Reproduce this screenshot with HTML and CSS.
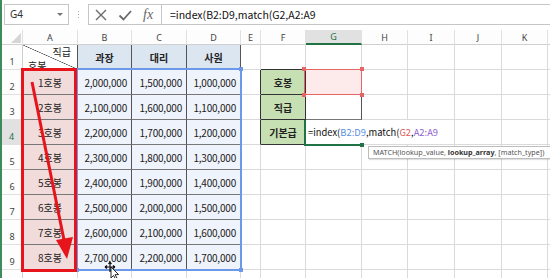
FILE: index.html
```html
<!DOCTYPE html>
<html>
<head>
    <title>호봉표 - Excel</title>
    <link rel="stylesheet" href="styles.css">
</head>
<body>
<div class="app">
    <div class="edge"></div>
    <div class="main">
        <div class="formula-bar">
            <div class="name-box">G4<span class="drop"></span></div>
            <div class="grip"><span></span><span></span><span></span></div>
            <div class="fx-box">
                <svg class="ico" width="14" height="14" viewBox="0 0 14 14"><path d="M2 2 L12 12 M12 2 L2 12" stroke="#6a6a6a" stroke-width="1.4" fill="none"/></svg>
                <svg class="ico" width="14" height="14" viewBox="0 0 14 14"><path d="M1.5 7.5 L5.5 11.5 L13 3" stroke="#6a6a6a" stroke-width="1.8" fill="none"/></svg>
                <span class="fx">fx</span>
            </div>
            <div class="formula-input">=index(B2:D9,match(G2,A2:A9</div>
        </div>

        <table class="sheet">
            <colgroup>
                <col class="w-rh"><col class="w-a"><col class="w-b"><col class="w-c"><col class="w-d"><col class="w-e">
                <col class="w-f"><col class="w-g"><col class="w-h"><col class="w-i"><col class="w-j"><col class="w-k"><col class="w-l">
            </colgroup>
            <tr class="head-row">
                <td class="corner"><span class="tri"></span></td>
                <td class="ch">A</td><td class="ch">B</td><td class="ch">C</td><td class="ch">D</td><td class="ch">E</td>
                <td class="ch">F</td><td class="ch active">G</td><td class="ch">H</td><td class="ch">I</td><td class="ch">J</td><td class="ch">K</td><td class="ch"></td>
            </tr>
            <tr>
                <td class="rh">1</td>
                <td class="tb diag"><div class="diag-text"><span class="top">직급</span><span class="bottom">호봉</span></div></td>
                <td class="tb hd">과장</td><td class="tb hd">대리</td><td class="tb hd">사원</td>
                <td></td><td class="bb"></td><td class="bb"></td><td></td><td></td><td></td><td></td><td></td>
            </tr>
            <tr>
                <td class="rh">2</td>
                <td class="tb a">1호봉</td><td class="tb num">2,000,000</td><td class="tb num">1,500,000</td><td class="tb num">1,000,000</td>
                <td class="br"></td><td class="tb lbl">호봉</td><td class="tb pink"></td><td></td><td></td><td></td><td></td><td></td>
            </tr>
            <tr>
                <td class="rh">3</td>
                <td class="tb a">2호봉</td><td class="tb num">2,100,000</td><td class="tb num">1,600,000</td><td class="tb num">1,100,000</td>
                <td class="br"></td><td class="tb lbl">직급</td><td class="tb"></td><td></td><td></td><td></td><td></td><td></td>
            </tr>
            <tr>
                <td class="rh active">4</td>
                <td class="tb a">3호봉</td><td class="tb num">2,200,000</td><td class="tb num">1,700,000</td><td class="tb num">1,200,000</td>
                <td class="br"></td><td class="tb lbl">기본급</td>
                <td class="edit" colspan="3">=index(<span class="ref-b">B2:D9</span>,match(<span class="ref-g">G2</span>,<span class="ref-a">A2:A9</span></td>
                <td></td><td></td><td></td>
            </tr>
            <tr>
                <td class="rh">5</td>
                <td class="tb a">4호봉</td><td class="tb num">2,300,000</td><td class="tb num">1,800,000</td><td class="tb num">1,300,000</td>
                <td></td><td></td><td></td><td></td><td></td><td></td><td></td><td></td>
            </tr>
            <tr>
                <td class="rh">6</td>
                <td class="tb a">5호봉</td><td class="tb num">2,400,000</td><td class="tb num">1,900,000</td><td class="tb num">1,400,000</td>
                <td></td><td></td><td></td><td></td><td></td><td></td><td></td><td></td>
            </tr>
            <tr>
                <td class="rh">7</td>
                <td class="tb a">6호봉</td><td class="tb num">2,500,000</td><td class="tb num">2,000,000</td><td class="tb num">1,500,000</td>
                <td></td><td></td><td></td><td></td><td></td><td></td><td></td><td></td>
            </tr>
            <tr>
                <td class="rh">8</td>
                <td class="tb a">7호봉</td><td class="tb num">2,600,000</td><td class="tb num">2,100,000</td><td class="tb num">1,600,000</td>
                <td></td><td></td><td></td><td></td><td></td><td></td><td></td><td></td>
            </tr>
            <tr>
                <td class="rh">9</td>
                <td class="tb a">8호봉</td><td class="tb num">2,700,000</td><td class="tb num">2,200,000</td><td class="tb num">1,700,000</td>
                <td></td><td></td><td></td><td></td><td></td><td></td><td></td><td></td>
            </tr>
            <tr>
                <td class="rh">10</td>
                <td></td><td></td><td></td><td></td><td></td><td></td><td></td><td></td><td></td><td></td><td></td><td></td>
            </tr>
        </table>
    </div>

    <!-- overlays: range highlights, annotation, tooltip -->
    <div class="sel-blue">
        <span class="hdl tr"></span><span class="hdl br"></span><span class="hdl bl"></span>
    </div>
    <div class="sel-red">
        <span class="hdl tl"></span><span class="hdl tr"></span><span class="hdl br"></span><span class="hdl bl"></span>
    </div>
    <div class="active-cell"><span class="fill-hdl"></span></div>
    <div class="mark-box"></div>
    <svg class="arrow" width="550" height="278" viewBox="0 0 550 278">
        <line x1="32" y1="82" x2="64" y2="240" stroke="#e8141c" stroke-width="3"/>
        <polygon points="56,240 73,237 67,259" fill="#e8141c"/>
    </svg>
    <div class="tooltip">MATCH(lookup_value, <b>lookup_array</b>, [match_type])</div>
    <svg class="cursor" width="18" height="18" viewBox="0 0 18 18">
        <path d="M6 1 L6 11 M1 6 L11 6 M6 1 L4.5 3 M6 1 L7.5 3 M1 6 L3 4.5 M1 6 L3 7.5 M11 6 L9 4.5 M11 6 L9 7.5" stroke="#111" stroke-width="1.2" fill="none"/>
        <path d="M7 6 L7 17 L9.5 14.5 L11.5 18 L13 17 L11 13.8 L14.5 13.5 Z" fill="#fff" stroke="#111" stroke-width="0.9"/>
    </svg>
</div>
</body>
</html>
```

FILE: styles.css
```css
body {
    margin: 0;
    padding: 0;
    font-family: "Noto Sans CJK KR", "Noto Sans", sans-serif;
    background-color: #fff;
}

.app {
    position: relative;
    display: flex;
    width: 550px;
    height: 278px;
    overflow: hidden;
}

.edge {
    flex: none;
    width: 2px;
    background-color: #3d8b5d;
}

.main {
    flex: 1;
    min-width: 0;
    display: flex;
    flex-direction: column;
    overflow: hidden;
}

/* formula bar */
.formula-bar {
    flex: none;
    height: 30px;
    padding-top: 4px;
    box-sizing: border-box;
    display: flex;
    align-items: flex-start;
}

.name-box {
    position: relative;
    width: 65px;
    height: 21px;
    margin-left: 2px;
    padding-left: 5px;
    border: 1px solid #c6c6c6;
    box-sizing: border-box;
    font-family: "Noto Sans", sans-serif;
    font-size: 10px;
    line-height: 19px;
    color: #333;
}

.drop {
    position: absolute;
    right: 5px;
    top: 8px;
    border-left: 3px solid transparent;
    border-right: 3px solid transparent;
    border-top: 3px solid #777;
}

.grip {
    width: 19px;
    height: 21px;
    display: flex;
    flex-direction: column;
    align-items: center;
    justify-content: center;
    gap: 2px;
}

.grip span {
    width: 1px;
    height: 1px;
    background-color: #aaa;
}

.fx-box {
    width: 73px;
    height: 21px;
    border: 1px solid #c6c6c6;
    border-right: none;
    box-sizing: border-box;
    display: flex;
    align-items: center;
    padding-left: 5px;
    gap: 10px;
}

.fx {
    font-family: "Liberation Serif", serif;
    font-style: italic;
    font-size: 14px;
    color: #666;
    margin-left: 1px;
}

.formula-input {
    flex: 1;
    height: 21px;
    border: 1px solid #c6c6c6;
    border-right: none;
    box-sizing: border-box;
    padding-left: 8px;
    font-size: 10.5px;
    line-height: 19px;
    color: #111;
    white-space: nowrap;
}

/* sheet grid */
.sheet {
    border-collapse: separate;
    border-spacing: 0;
    table-layout: fixed;
    width: 558px;
}

.sheet td {
    padding: 0;
    height: 25px;
    box-sizing: border-box;
    border-right: 1px solid #dadada;
    border-bottom: 1px solid #dadada;
    font-size: 10px;
    color: #222;
    white-space: nowrap;
    overflow: hidden;
    text-align: center;
    vertical-align: middle;
}

.w-rh { width: 21px; }
.w-a { width: 55px; }
.w-b { width: 54px; }
.w-c { width: 55px; }
.w-d { width: 54px; }
.w-e { width: 20px; }
.w-f { width: 45px; }
.w-g { width: 56px; }
.w-h { width: 46px; }
.w-i { width: 47px; }
.w-j { width: 47px; }
.w-k { width: 46px; }
.w-l { width: 12px; }

.sheet .head-row td {
    height: 15px;
    font-family: "Noto Sans", sans-serif;
    font-size: 9px;
    color: #444;
    border-right-color: #e1e1e1;
    border-bottom: 1px solid #d0d0d0;
    background-color: #fdfdfd;
}

.sheet .corner {
    position: relative;
}

.tri {
    position: absolute;
    right: 1px;
    bottom: 1px;
    width: 0;
    height: 0;
    border-left: 10px solid transparent;
    border-bottom: 10px solid #d6d6d6;
}

.sheet .head-row .active {
    background-color: #e1e1e1;
    color: #217346;
    border-bottom: 2px solid #217346;
}

.sheet .rh {
    font-family: "Noto Sans", sans-serif;
    font-size: 9px;
    color: #444;
    vertical-align: bottom;
    line-height: 14px;
    background-color: #fdfdfd;
    border-right-color: #d0d0d0;
    border-bottom-color: #e1e1e1;
}

.sheet .rh.active {
    background-color: #e1e1e1;
    color: #217346;
    border-right: 2px solid #217346;
}

.sheet .tb {
    border-right-color: #555;
    border-bottom-color: #777;
}

.sheet .bb {
    border-bottom-color: #333;
}

.sheet .br {
    border-right-color: #333;
}

.sheet .diag {
    background: linear-gradient(to top right, transparent calc(50% - 0.6px), #444 50%, transparent calc(50% + 0.6px));
    vertical-align: top;
}

.diag-text {
    display: flex;
    flex-direction: column;
    height: 24px;
    line-height: 11px;
}

.diag-text .top {
    text-align: right;
    padding: 1px 6px 0 0;
}

.diag-text .bottom {
    text-align: left;
    padding: 3px 0 0 5px;
}

.sheet .hd {
    background-color: #dce6f1;
    font-weight: bold;
}

.sheet .a {
    background-color: #f2dcdb;
}

.sheet .num {
    background-color: #eff3fb;
    text-align: right;
    padding-right: 4px;
    letter-spacing: -0.2px;
}

.sheet .lbl {
    background-color: #c6dfb3;
    font-weight: bold;
    border-right-color: #333;
    border-bottom-color: #333;
}

.sheet .pink {
    background-color: #fdeaea;
}

.sheet .edit {
    text-align: left;
    padding-left: 2px;
    font-size: 9.4px;
    color: #111;
}

.ref-b { color: #5b8fe0; }
.ref-g { color: #e05a5a; }
.ref-a { color: #8e63ce; }

/* overlays */
.sel-blue {
    position: absolute;
    left: 76px;
    top: 68px;
    width: 166px;
    height: 203px;
    border: 2px solid #6b98e8;
    box-sizing: border-box;
}

.sel-red {
    position: absolute;
    left: 304px;
    top: 69px;
    width: 58px;
    height: 26px;
    border: 1px solid #e56464;
    box-sizing: border-box;
}

.hdl {
    position: absolute;
    width: 4px;
    height: 4px;
    background-color: #6b98e8;
}

.sel-red .hdl {
    background-color: #e56464;
}

.hdl.tl { left: -3px; top: -3px; }
.hdl.tr { right: -3px; top: -3px; }
.hdl.br { right: -3px; bottom: -3px; }
.hdl.bl { left: -3px; bottom: -3px; }

.active-cell {
    position: absolute;
    left: 304px;
    top: 120px;
    width: 57px;
    height: 26px;
    border-left: 2px solid #217346;
    border-bottom: 2px solid #217346;
    box-sizing: border-box;
}

.fill-hdl {
    position: absolute;
    right: -3px;
    bottom: -3px;
    width: 4px;
    height: 4px;
    background-color: #217346;
}

.mark-box {
    position: absolute;
    left: 21px;
    top: 68px;
    width: 56px;
    height: 204px;
    border: 3px solid #e8141c;
    box-sizing: border-box;
}

.arrow {
    position: absolute;
    left: 0;
    top: 0;
}

.tooltip {
    position: absolute;
    left: 368px;
    top: 146px;
    width: 190px;
    height: 13px;
    padding-left: 4px;
    border: 1px solid #bdbdbd;
    box-sizing: border-box;
    background-color: #fff;
    box-shadow: 1px 1px 1px rgba(0, 0, 0, 0.12);
    font-family: "Noto Sans", sans-serif;
    font-size: 7.2px;
    line-height: 11px;
    color: #555;
    white-space: nowrap;
}

.tooltip b {
    color: #333;
}

.cursor {
    position: absolute;
    left: 104px;
    top: 261px;
}
```
